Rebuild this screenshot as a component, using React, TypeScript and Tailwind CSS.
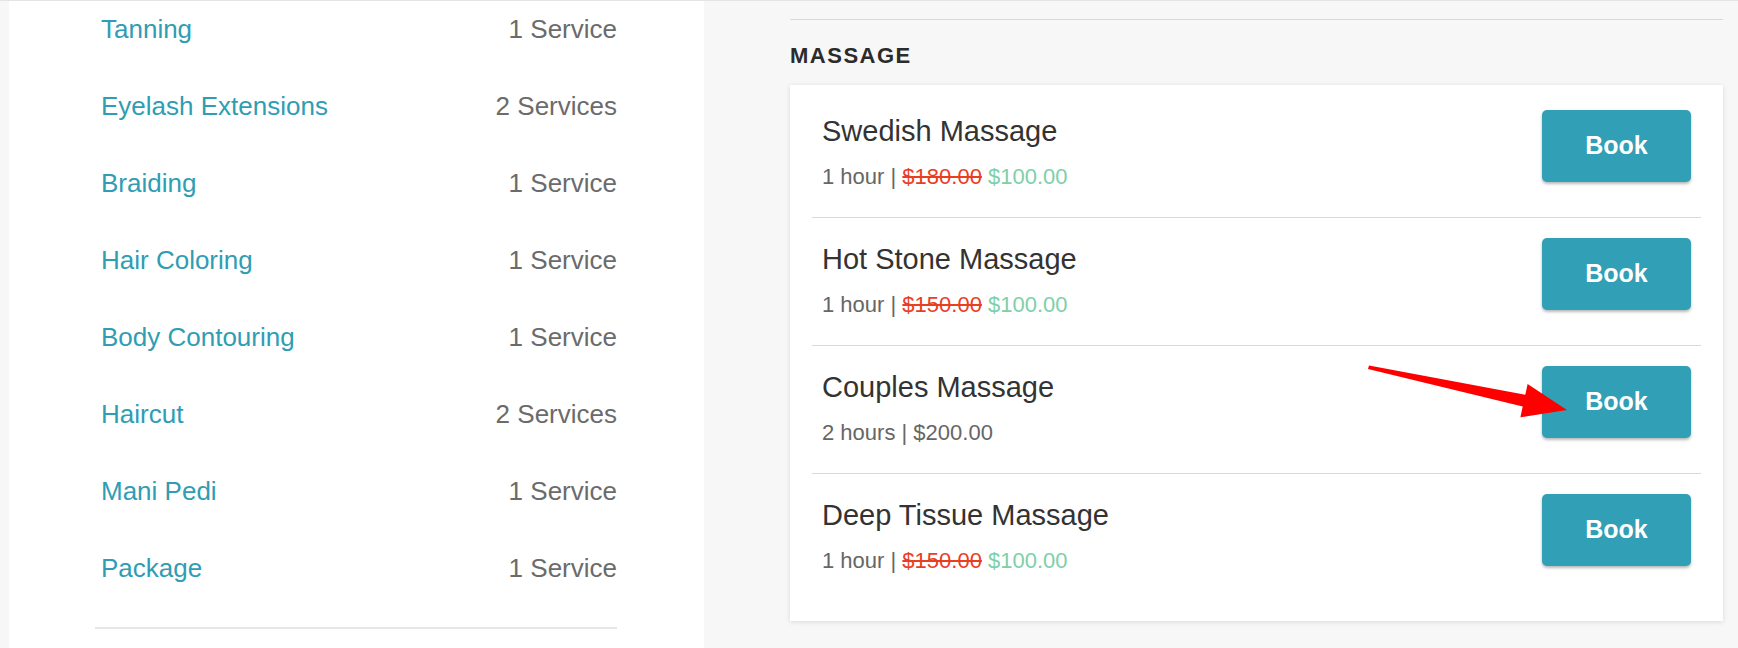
const categories = [
  { name: "Tanning", count: "1 Service" },
  { name: "Eyelash Extensions", count: "2 Services" },
  { name: "Braiding", count: "1 Service" },
  { name: "Hair Coloring", count: "1 Service" },
  { name: "Body Contouring", count: "1 Service" },
  { name: "Haircut", count: "2 Services" },
  { name: "Mani Pedi", count: "1 Service" },
  { name: "Package", count: "1 Service" },
];

const services = [
  { name: "Swedish Massage", duration: "1 hour", oldPrice: "$180.00", price: "$100.00" },
  { name: "Hot Stone Massage", duration: "1 hour", oldPrice: "$150.00", price: "$100.00" },
  { name: "Couples Massage", duration: "2 hours", oldPrice: null, price: "$200.00" },
  { name: "Deep Tissue Massage", duration: "1 hour", oldPrice: "$150.00", price: "$100.00" },
];

function CategoryList() {
  return (
    <div className="ml-[9px] w-[695px] shrink-0 bg-white">
      <div className="ml-[86px] w-[522px]">
        {categories.map((c) => (
          <div key={c.name} className="flex h-[77px] justify-between pl-[6px] pt-[14px] text-[26px] leading-[30px]">
            <a href="#" className="text-[#2f9db3]">{c.name}</a>
            <span className="text-[#6b6b6b]">{c.count}</span>
          </div>
        ))}
        <div className="mt-[11px] h-[2px] bg-[#e6e6e6]"></div>
      </div>
    </div>
  );
}

function ServiceRow({ service, last }: { service: (typeof services)[number]; last: boolean }) {
  return (
    <div className={`mx-[22px] flex items-start justify-between px-[10px] pt-5 pb-6 ${last ? "" : "border-b border-[#d9d9d9]"}`}>
      <div>
        <div className="text-[29px] leading-[43px] text-[#333333]">{service.name}</div>
        <div className="mt-[7px] text-[22px] leading-[33px] text-[#666666]">
          {service.duration} |{" "}
          {service.oldPrice && (
            <>
              <del className="text-[#e8401f]">{service.oldPrice}</del>{" "}
              <span className="text-[#80cfa6]">{service.price}</span>
            </>
          )}
          {!service.oldPrice && <span>{service.price}</span>}
        </div>
      </div>
      <button className="h-[72px] w-[149px] rounded-[5px] bg-[#319fb6] text-[25px] font-bold text-white shadow-[0_2px_3px_rgba(0,0,0,0.28)]">
        Book
      </button>
    </div>
  );
}

export default function App() {
  return (
    <div className="relative flex h-[648px] w-full overflow-hidden bg-[#f7f7f7] font-['Liberation_Sans',Arial,sans-serif]">
      <div className="absolute inset-x-0 top-0 h-px bg-[#e4e4e4]"></div>
      <CategoryList />
      <div className="ml-[86px] w-[933px] pt-[19px]">
        <div className="border-t border-[#dadada]"></div>
        <h2 className="mt-[23px] mb-4 text-[22px] font-bold leading-[26px] tracking-[1.5px] text-[#2b2b2b]">MASSAGE</h2>
        <div className="bg-white pt-[5px] pb-5 shadow-[0_1px_5px_rgba(0,0,0,0.12)]">
          {services.map((s, i) => (
            <ServiceRow key={s.name} service={s} last={i === services.length - 1} />
          ))}
        </div>
      </div>
      <svg className="pointer-events-none absolute inset-0" width="1738" height="648" viewBox="0 0 1738 648">
        <polygon points="1369,365.5 1525.3,394.8 1527.6,384.1 1567,410 1520.4,417.3 1522.7,406.6 1368,369" fill="#ff0000" />
      </svg>
    </div>
  );
}
